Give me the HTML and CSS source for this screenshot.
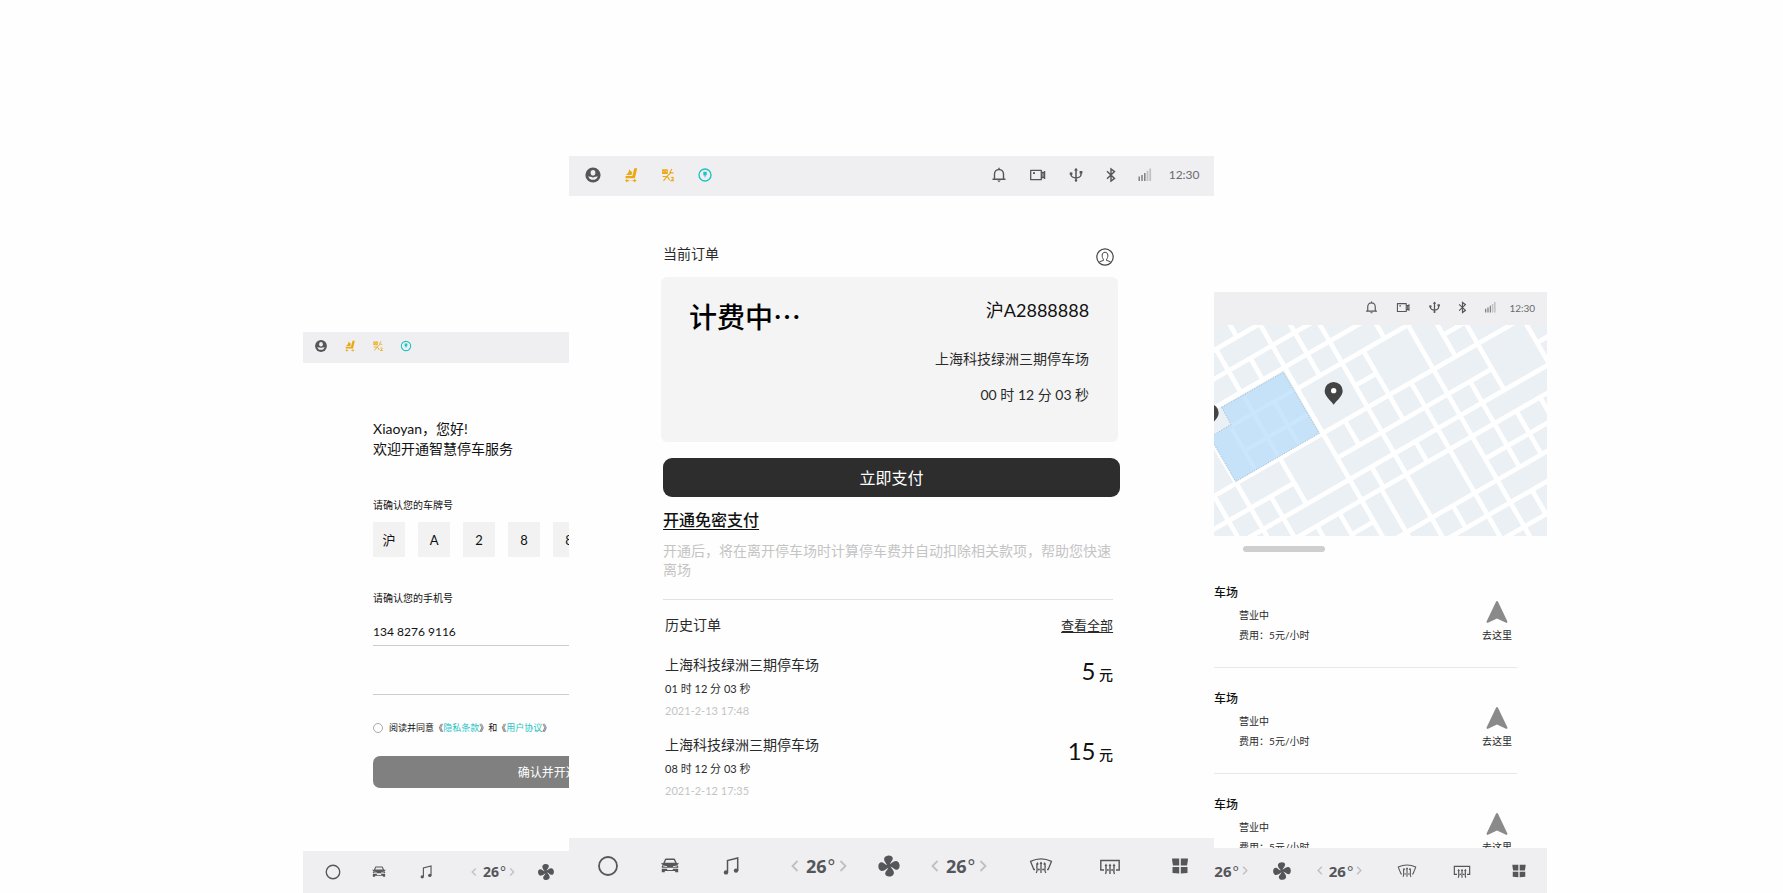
FILE: index.html
```html
<!DOCTYPE html>
<html lang="zh-CN">
<head>
<meta charset="utf-8">
<title>智慧停车</title>
<link rel="stylesheet" href="styles.css">
</head>
<body>
<svg class="sprite" aria-hidden="true">
  <symbol id="i-user" viewBox="0 0 18 18"><circle cx="9" cy="9" r="7.6" fill="#55565a"/><ellipse cx="9" cy="6.800" rx="2.400" ry="2.800" fill="#efeff1"/><path d="M4.300 10.200c.6 2.600 2.500 3.600 4.700 3.600s4.100-1 4.700-3.600c-1.200.6-2.200.6-2.800.6-.6.500-1.200.6-1.900.6s-1.300-.1-1.900-.6c-.6 0-1.600 0-2.800-.6z" fill="#efeff1"/></symbol>
  <symbol id="i-seat" viewBox="0 0 18 18"><g fill="#eaa913"><path d="M12.300 2.300h2.900L12.900 12.200H3.500V9.900h6.800z"/><path d="M7.400 3.300l1.600 2.200 1.300.2-.8 3.300H4l2.200-2.200z"/><path d="M3 14.600l2.300-1.800v1.200h7v-1.200l2.300 1.800-2.300 1.800v-1.200h-1.500v-.9H6.800v.9H5.300v1.200z"/></g></symbol>
  <symbol id="i-air" viewBox="0 0 18 18"><g fill="none" stroke="#eaa913" stroke-width="1.100"><path d="M3.600 3.800h4.600v3.600H3.600zM3.600 3.800l4.600 3.600M8.200 3.800L3.600 7.400M12.800 3l-1.800 3.300 3.500.8M11.500 7L8 10.300l-4.500.2M8 10.300l-3.500 4.500M8.500 10.600l2.200 3.600M12.200 11.800c1-.9 3-.2 1.900 1.200L12.200 14.800h3"/></g></symbol>
  <symbol id="i-charge" viewBox="0 0 18 18"><circle cx="9" cy="9" r="6" fill="none" stroke="#1fc4c4" stroke-width="1.400"/><path d="M7.300 5.800h3.400v3.500H9.700L9 12.300 8.300 9.300h-1z" fill="#1fc4c4"/></symbol>
  <symbol id="i-bell" viewBox="0 0 18 18"><path d="M4.500 13V8a4.500 4.500 0 0 1 9 0v5M2.500 13.300h13M9 3.500V1.800" fill="none" stroke="#55565a" stroke-width="1.400"/><path d="M7.200 14.600h3.600L9 16.200z" fill="#55565a"/></symbol>
  <symbol id="i-cam" viewBox="0 0 18 18"><path d="M1.700 4.300h10.600v9.400H1.700zM12.300 6.500h3.300v5h-3.300M14 6.500v5M15.600 5v8" fill="none" stroke="#55565a" stroke-width="1.300" stroke-linejoin="round"/><path d="M4 6.300h2v1.600H4z" fill="#55565a"/></symbol>
  <symbol id="i-usb" viewBox="0 0 18 18"><path d="M9 3v12M4 6.800v1.700c0 2 2.500 3.500 5 3.500s5-1.500 5-3.500V6.300" fill="none" stroke="#55565a" stroke-width="1.500"/><path d="M9 1.800l2 2.800H7zM2.700 6.500h2.700v2.300H2.700zM12.600 5h2.800v2.500h-2.800z" fill="#55565a"/><circle cx="9" cy="14.500" r="1.200" fill="#55565a"/></symbol>
  <symbol id="i-bt" viewBox="0 0 18 18"><path d="M5 5.200l7.500 7.200L9 15V3l3.500 2.600L5 12.800" fill="none" stroke="#55565a" stroke-width="1.400"/></symbol>
  <symbol id="i-signal" viewBox="0 0 18 18"><path d="M3.200 15v-4.500M6 15V9M8.800 15V7" stroke="#77787b" stroke-width="1.400"/><path d="M11.500 15V4.800M14.200 15V2.500" stroke="#c2c2c5" stroke-width="1.800"/></symbol>
  <symbol id="i-home" viewBox="0 0 24 24"><circle cx="12" cy="12" r="9" fill="none" stroke="#55565a" stroke-width="1.800"/></symbol>
  <symbol id="i-car" viewBox="0 0 24 24"><path d="M7.700 5.300h8.600l2 4.200H5.700z" fill="none" stroke="#55565a" stroke-width="1.400" stroke-linejoin="round"/><path d="M3.500 8.700l2.700 1h11.600l2.700-1v1.200l-1.300 1.100 1 1.300v1.500H3.800v-1.500l1-1.300-1.300-1.100zM3.800 14.700h5.400v1.200h5.600v-1.200h5.400v3.600h-3v-1.200H6.800v1.200h-3z" fill="#55565a"/><path d="M5 12l4 .7M19 12l-4 .7" stroke="#efeff1" stroke-width=".9"/></symbol>
  <symbol id="i-music" viewBox="0 0 24 24"><path d="M8.500 18V6.500l10.200-2.600V17" fill="none" stroke="#55565a" stroke-width="1.500"/><circle cx="7" cy="18.400" r="2.200" fill="#55565a"/><circle cx="17" cy="16.600" r="2.200" fill="#55565a"/></symbol>
  <symbol id="i-fan" viewBox="0 0 24 24"><g fill="#55565a" transform="rotate(8 12 12)"><path id="blade" d="M11.400 12.600C9.700 10.500 5.600 8 6.200 4.700 6.700 2 11 .7 13.200 1.900c2.300 1.300 1.600 3.700.4 5.500-.8 1.300-1.100 2.600-.8 4.600z"/><use href="#blade" transform="rotate(90 12 12)"/><use href="#blade" transform="rotate(180 12 12)"/><use href="#blade" transform="rotate(270 12 12)"/></g></symbol>
  <symbol id="i-front" viewBox="0 0 24 24"><g fill="none" stroke="#55565a" stroke-width="1.300"><path d="M6 15.500H4.800L1.500 7.300Q12 2.300 22.500 7.300L19.200 15.500H18M8.800 15.500h2M13.200 15.500h2" stroke-linejoin="round"/><path d="M7.200 19q1.300-2 .8-4.500T8.400 9.500M12 19V8.500M16.800 19q-1.300-2-.8-4.500t-.4-5"/></g><path d="M8.400 8l1.500 2.400h-3zM12 7.500l1.500 2.400h-3zM15.600 8l1.500 2.400h-3z" fill="#55565a"/></symbol>
  <symbol id="i-rear" viewBox="0 0 24 24"><g fill="none" stroke="#55565a" stroke-width="1.400"><path d="M6 16H2.800V6.500h18.400V16H18M9 16h1.800M13.200 16H15"/><path d="M7.500 20q1-2 .5-4.500V11M12 20v-9M16.500 20q-1-2-.5-4.500V11"/></g><path d="M8 9.400l1.500 2.500h-3zM12 9.400l1.500 2.500h-3zM16 9.400l1.500 2.500h-3z" fill="#55565a"/></symbol>
  <symbol id="i-apps" viewBox="0 0 24 24"><path d="M4 4.500h7.200v7H5q-.8-3.500-1-7zM20 4.500h-7.200v7H19q.8-3.500 1-7zM4.500 12.900h6.700v6.600l-6.700-.5zM19.500 12.900h-6.700v6.600l6.700-.5z" fill="#55565a"/></symbol>
  <symbol id="i-prev" viewBox="0 0 8 14"><path d="M6.500 2L1.500 7l5 5" fill="none" stroke="#bfbfc2" stroke-width="1.800"/></symbol>
  <symbol id="i-next" viewBox="0 0 8 14"><path d="M1.500 2l5 5-5 5" fill="none" stroke="#bfbfc2" stroke-width="1.800"/></symbol>
  <symbol id="i-go" viewBox="0 0 22 22"><path d="M11 0c.5 0 .8.300 1 .8l9.300 19.500c.4 1-.3 1.900-1.300 1.500L11 17.500l-9 4.300c-1 .4-1.700-.5-1.300-1.500L10 .8c.2-.5.5-.8 1-.8z" fill="#8a8a8a"/></symbol>
</svg>

<main class="stage">
  <section class="panel panel-signup">
    <div class="screen">
      <header class="status">
        <svg class="s-user"><use href="#i-user"/></svg>
        <svg class="s-seat"><use href="#i-seat"/></svg>
        <svg class="s-air"><use href="#i-air"/></svg>
        <svg class="s-charge"><use href="#i-charge"/></svg>
      </header>
      <form class="signup">
        <h1 class="greeting">Xiaoyan，您好!<br>欢迎开通智慧停车服务</h1>
        <label class="field-label" for="plate">请确认您的车牌号</label>
        <div class="plate">
          <input id="plate" value="沪"><input aria-label="第2位" value="A"><input aria-label="第3位" value="2"><input aria-label="第4位" value="8"><input aria-label="第5位" value="8"><input aria-label="第6位" value="8"><input aria-label="第7位" value="8"><input aria-label="第8位" value="8">
        </div>
        <label class="field-label field-phone" for="phone">请确认您的手机号</label>
        <input class="line-input" id="phone" type="tel" value="134 8276 9116">
        <input class="line-input line-code" aria-label="验证码">
        <div class="agree"><input type="radio" id="agree"><label for="agree">阅读并同意</label><span>《<a href="#privacy">隐私条款</a>》</span><span>和</span><span>《<a href="#terms">用户协议</a>》</span></div>
        <button class="confirm" type="button">确认并开通</button>
      </form>
      <nav class="dock">
        <button class="d-home" aria-label="主页"><svg><use href="#i-home"/></svg></button>
        <button class="d-car" aria-label="车辆"><svg><use href="#i-car"/></svg></button>
        <button class="d-music" aria-label="音乐"><svg><use href="#i-music"/></svg></button>
        <div class="temp d-left"><button aria-label="降温"><svg><use href="#i-prev"/></svg></button><span><b>26</b>°</span><button aria-label="升温"><svg><use href="#i-next"/></svg></button></div>
        <button class="d-fan" aria-label="风扇"><svg><use href="#i-fan"/></svg></button>
      </nav>
    </div>
  </section>

  <section class="panel panel-order">
    <div class="screen">
      <header class="status">
        <svg class="s-user"><use href="#i-user"/></svg>
        <svg class="s-seat"><use href="#i-seat"/></svg>
        <svg class="s-air"><use href="#i-air"/></svg>
        <svg class="s-charge"><use href="#i-charge"/></svg>
        <svg class="s-bell"><use href="#i-bell"/></svg>
        <svg class="s-cam"><use href="#i-cam"/></svg>
        <svg class="s-usb"><use href="#i-usb"/></svg>
        <svg class="s-bt"><use href="#i-bt"/></svg>
        <svg class="s-signal"><use href="#i-signal"/></svg>
        <time class="s-time">12:30</time>
      </header>
      <div class="order">
        <div class="order-head">
          <h2>当前订单</h2>
          <button class="avatar" aria-label="我的"><svg viewBox="0 0 18 18"><circle cx="9" cy="9" r="8.200" fill="none" stroke="#444" stroke-width="1.200"/><path d="M3.200 14.300c1-1 2.300-1.300 4.200-1.800v-1.400C5.600 9.500 5.400 4.200 9 4.200s3.400 5.300 1.600 6.900v1.400c1.900.5 3.200.8 4.200 1.800" fill="none" stroke="#444" stroke-width="1"/></svg></button>
        </div>
        <article class="card">
          <h3>计费中…</h3>
          <div class="card-info">
            <p class="card-plate">沪A2888888</p>
            <p class="card-lot">上海科技绿洲三期停车场</p>
            <p class="card-time">00 时 12 分 03 秒</p>
          </div>
        </article>
        <button class="pay">立即支付</button>
        <a class="autopay" href="#autopay">开通免密支付</a>
        <p class="hint">开通后，将在离开停车场时计算停车费并自动扣除相关款项，帮助您快速离场</p>
        <div class="history">
          <div class="history-head"><h2>历史订单</h2><a href="#all">查看全部</a></div>
          <article class="past">
            <div><h3>上海科技绿洲三期停车场</h3><p class="past-time">01 时 12 分 03 秒</p><p class="past-date">2021-2-13 17:48</p></div>
            <p class="price"><b>5</b> <span>元</span></p>
          </article>
          <article class="past">
            <div><h3>上海科技绿洲三期停车场</h3><p class="past-time">08 时 12 分 03 秒</p><p class="past-date">2021-2-12 17:35</p></div>
            <p class="price"><b>15</b> <span>元</span></p>
          </article>
        </div>
      </div>
      <nav class="dock">
        <button class="d-home" aria-label="主页"><svg><use href="#i-home"/></svg></button>
        <button class="d-car" aria-label="车辆"><svg><use href="#i-car"/></svg></button>
        <button class="d-music" aria-label="音乐"><svg><use href="#i-music"/></svg></button>
        <div class="temp d-left"><button aria-label="降温"><svg><use href="#i-prev"/></svg></button><span><b>26</b>°</span><button aria-label="升温"><svg><use href="#i-next"/></svg></button></div>
        <button class="d-fan" aria-label="风扇"><svg><use href="#i-fan"/></svg></button>
        <div class="temp d-right"><button aria-label="降温"><svg><use href="#i-prev"/></svg></button><span><b>26</b>°</span><button aria-label="升温"><svg><use href="#i-next"/></svg></button></div>
        <button class="d-front" aria-label="前除雾"><svg><use href="#i-front"/></svg></button>
        <button class="d-rear" aria-label="后除雾"><svg><use href="#i-rear"/></svg></button>
        <button class="d-apps" aria-label="应用"><svg><use href="#i-apps"/></svg></button>
      </nav>
    </div>
  </section>

  <section class="panel panel-map">
    <header class="status">
      <svg class="s-bell"><use href="#i-bell"/></svg>
      <svg class="s-cam"><use href="#i-cam"/></svg>
      <svg class="s-usb"><use href="#i-usb"/></svg>
      <svg class="s-bt"><use href="#i-bt"/></svg>
      <svg class="s-signal"><use href="#i-signal"/></svg>
      <time class="s-time">12:30</time>
    </header>
    <svg class="map" viewBox="27 120 999 633" preserveAspectRatio="xMidYMid slice" role="img" aria-label="停车场地图">
      <path d="M0 100h1060v680H0z" fill="#eaf0f4"/>
      <g transform="rotate(-30)" fill="none" stroke="#fff" stroke-width="14">
        <path d="M-400 183H90M-400 258H280M-400 333H400M90 408H500M240 487H314M544 487H800M-400 562H900M-400 648H-65M84 648H620M776 648H900M-400 722H900M-400 794H900M7 868H84M467 872H900M84 945H900M238 1023H900M389 1107H900"/>
        <path d="M5 0V183M-68 183V333M84 0V1100M8 258V333M162 0V408M239 0V1200M386 0V408M313 408V648M467 0V1200M544 0V562M620 0V722M776 300V722M-216 333V1000M-293 562V1000M-65 562V722M-146 646V1000M160 562V648M389 562V1200M160 722V794M152 794V1000M312 722V794M7 794V1000M-70 794V1000M544 648V945M620 794V945M702 794V872M313 945V1023M542 1023V1107"/>
      </g>
      <path d="M50 367L235 262 343 445 92 590 20 466V454L78 418z" fill="#c5e2f9" stroke="#8ba9bf" stroke-width="2" stroke-dasharray="4 4"/>
      <g transform="rotate(-30)" fill="none" stroke="#cbe6fc" stroke-width="12"><path d="M-140 406H72M-144 490H72M-146 412V553M-66 350V553M5 412V553"/></g>
      <path id="pin" d="M386 359C374 343 359 333 359 317a27 26 0 0 1 54 0c0 16-15 26-27 42z" fill="#444"/><circle cx="386" cy="317" r="8" fill="#fff"/>
      <use href="#pin" transform="translate(-372 66)"/>
    </svg>
    <div class="handle"></div>
    <ul class="lots">
      <li><div><h3>车场</h3><p>营业中</p><p>费用：5元/小时</p></div><button class="go"><svg><use href="#i-go"/></svg>去这里</button></li>
      <li><div><h3>车场</h3><p>营业中</p><p>费用：5元/小时</p></div><button class="go"><svg><use href="#i-go"/></svg>去这里</button></li>
      <li><div><h3>车场</h3><p>营业中</p><p>费用：5元/小时</p></div><button class="go"><svg><use href="#i-go"/></svg>去这里</button></li>
    </ul>
    <nav class="dock">
      <div class="temp d-left"><button aria-label="降温"><svg><use href="#i-prev"/></svg></button><span><b>26</b>°</span><button aria-label="升温"><svg><use href="#i-next"/></svg></button></div>
      <button class="d-fan" aria-label="风扇"><svg><use href="#i-fan"/></svg></button>
      <div class="temp d-right"><button aria-label="降温"><svg><use href="#i-prev"/></svg></button><span><b>26</b>°</span><button aria-label="升温"><svg><use href="#i-next"/></svg></button></div>
      <button class="d-front" aria-label="前除雾"><svg><use href="#i-front"/></svg></button>
      <button class="d-rear" aria-label="后除雾"><svg><use href="#i-rear"/></svg></button>
      <button class="d-apps" aria-label="应用"><svg><use href="#i-apps"/></svg></button>
    </nav>
  </section>
</main>
</body>
</html>
```
FILE: styles.css
```css
* { box-sizing: border-box; }
body, h1, h2, h3, p, ul { margin: 0; padding: 0; }
body {
  background: #fefefe;
  color: #2a2a2a;
  font-family: Lato, "Noto Sans CJK SC", sans-serif;
  font-size: 14px;
}
h1, h2, h3, b { font-weight: 400; }
button, input { margin: 0; padding: 0; border: 0; background: none; color: inherit; font: inherit; }
a { color: inherit; }
svg { display: block; }
.sprite { position: absolute; width: 0; height: 0; }

.stage {
  display: grid;
  grid-template-columns: 266fr 645fr 333fr;
  align-items: end;
  min-height: 100vh;
  padding: 0 13.23% 0 17%;
}
.panel { min-width: 0; overflow: hidden; display: flex; flex-direction: column; background: #fefefe; }
.panel-signup .screen { width: 184%; }
.panel-map .status, .panel-map .dock { width: 158%; align-self: flex-end; }

/* Status bar */
.status {
  display: grid;
  grid-template-columns: 38fr 38fr 36fr 38fr 256fr 40fr 38fr 38fr 32fr 36fr 42fr;
  align-items: center;
  justify-items: center;
  height: 40px;
  padding: 0 1.4% 2px 0.7%;
  background: #efeff1;
}
.status svg { width: 18px; height: 18px; grid-row: 1; }
.s-user { grid-column: 1; }
.s-seat { grid-column: 2; }
.s-air { grid-column: 3; }
.s-charge { grid-column: 4; }
.s-bell { grid-column: 6; }
.s-cam { grid-column: 7; }
.s-usb { grid-column: 8; }
.s-bt { grid-column: 9; }
.s-signal { grid-column: 10; }
.s-time { grid-column: 11; grid-row: 1; color: #6a6b6e; font-size: 12px; line-height: 16px; }
.panel-signup .status { height: 31px; padding-bottom: 3px; }
.panel-signup .status svg { width: 14px; height: 14px; }
.panel-map .status { height: 33px; padding: 0 2.3% 2px 0.9%; }
.panel-map .status svg { width: 15px; height: 15px; }
.panel-map .s-time { font-size: 10px; }

/* Climate dock */
.dock {
  display: grid;
  grid-template-columns: 62fr 62fr 62fr 116fr 20fr 118fr 48fr 90fr 52fr;
  align-items: center;
  justify-items: center;
  height: 55px;
  padding: 0 1.3%;
  background: #efeff1;
}
.dock > * { grid-row: 1; }
.dock svg { width: 24px; height: 24px; }
.d-home { grid-column: 1; }
.d-car { grid-column: 2; }
.d-music { grid-column: 3; }
.d-left { grid-column: 4; }
.d-fan { grid-column: 5; }
.d-right { grid-column: 6; }
.d-front { grid-column: 7; }
.d-rear { grid-column: 8; }
.d-apps { grid-column: 9; }
.temp { display: flex; align-items: center; gap: 7px; color: #55565a; font: 18px/24px "Noto Sans", sans-serif; }
.temp b { margin-right: 1px; font-weight: 700; }
.temp span { margin-right: -3px; }
.dock .temp svg { width: 8px; height: 14px; }
.panel-signup .dock { height: 42px; }
.panel-signup .dock svg { width: 18px; height: 18px; }
.panel-signup .temp { font-size: 14px; gap: 6px; }
.panel-signup .dock .temp svg { width: 6px; height: 10px; }
.panel-map .dock { height: 45px; padding: 0 2% 0 2.2%; }
.panel-map .dock svg { width: 20px; height: 20px; }
.panel-map .temp { font-size: 15px; gap: 6px; }
.panel-map .dock .temp svg { width: 6px; height: 11px; }

/* Sign-up form */
.signup { display: flex; flex-direction: column; padding: 56px 70px 63px; color: #111; }
.greeting { margin-bottom: 38px; font-size: 14px; line-height: 20px; }
.field-label { font-size: 10px; line-height: 16px; }
.field-phone { margin-top: 33px; }
.plate { display: flex; gap: 13px; margin-top: 9px; }
.plate input { flex: none; width: 32px; height: 35px; background: #f2f2f2; font-size: 13px; text-align: center; }
.line-input { height: 26px; margin-top: 14px; padding-bottom: 2px; border-bottom: 1px solid #cdcdcd; font-size: 12px; }
.line-code { height: 49px; margin-top: 0; }
.agree { display: flex; align-items: center; margin-top: 25px; font-size: 9px; line-height: 16px; white-space: nowrap; }
.agree input { appearance: none; width: 10px; height: 10px; margin-right: 6px; border: 1px solid #aaa; border-radius: 50%; }
.agree a { color: #1fc4c4; text-decoration: none; }
.confirm { height: 32px; margin-top: 20px; padding-bottom: 1px; border-radius: 7px; background: #808080; color: #fff; font-size: 12px; }

/* Current order */
.order { padding: 46px 94px 39px; }
.order-head { display: flex; align-items: flex-end; justify-content: space-between; padding-right: 6px; }
.order h2 { font-size: 14px; line-height: 24px; }
.avatar svg { width: 18px; height: 18px; }
.card { display: flex; justify-content: space-between; margin: 11px 2px 0 -2px; padding: 18px 29px 36px 28px; border-radius: 6px; background: #f4f4f4; }
.card h3 { color: #000; font-size: 28px; font-weight: 500; line-height: 42px; font-family: "Noto Sans CJK SC", sans-serif; }
.card-info { text-align: right; }
.card-plate { color: #111; font-size: 18px; line-height: 30px; }
.card-lot { margin-top: 23px; line-height: 22px; }
.card-time { margin-top: 14px; line-height: 22px; }
.pay { display: block; width: 100%; height: 39px; margin-top: 16px; padding-bottom: 2px; border-radius: 9px; background: #2d2d2d; color: #fff; font-size: 16px; }
.autopay { display: table; margin-top: 11px; color: #111; font-size: 16px; font-weight: 500; line-height: 24px; text-decoration-thickness: 1px; text-underline-offset: 3px; }
.hint { margin-top: 9px; color: #c4c4c4; line-height: 19px; }
.history { margin: 20px 7px 0 0; border-top: 1px solid #e2e2e2; padding: 14px 0 0 2px; }
.history-head { display: flex; align-items: center; justify-content: space-between; margin-bottom: 18px; }
.history-head h2 { line-height: 22px; }
.history-head a { font-size: 13px; line-height: 22px; text-decoration-thickness: 1px; text-underline-offset: 2px; }
.past { display: flex; justify-content: space-between; }
.past + .past { margin-top: 15px; }
.past h3 { font-size: 14px; line-height: 22px; }
.past-time { margin-top: 4px; font-size: 11px; line-height: 18px; }
.past-date { margin-top: 5px; color: #c4c4c4; font-size: 11px; line-height: 16px; }
.price { color: #111; line-height: 34px; }
.price b { font-size: 24px; }
.price span { font-weight: 500; }

/* Nearby car parks */
.map { width: 100%; height: 211px; }
.handle { width: 82px; height: 6px; margin: 10px 0 10px 29px; border-radius: 3px; background: #cfcfcf; }
.lots { height: 286px; padding-right: 30px; overflow: hidden; list-style: none; }
.lots li { display: flex; justify-content: space-between; height: 106px; padding: 23px 5px 0 0; border-bottom: 1px solid #e8e8e8; }
.lots h3 { margin-bottom: 6px; color: #111; font-size: 12px; font-weight: 500; line-height: 16px; }
.lots p { margin: 0 0 4px 25px; font-size: 10px; line-height: 16px; }
.go { display: flex; flex-direction: column; align-items: center; align-self: flex-start; gap: 4px; padding-top: 16px; font-size: 10px; line-height: 16px; }
.go svg { width: 22px; height: 22px; }
```
